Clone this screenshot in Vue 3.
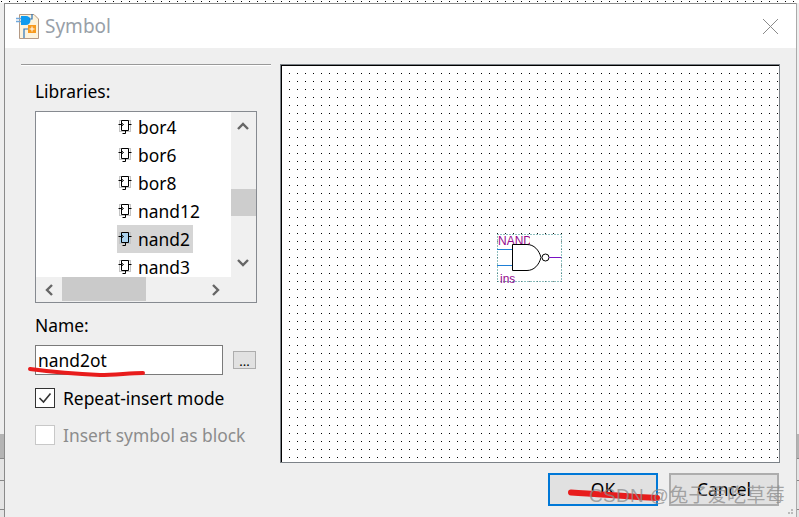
<template>
  <div class="screen">
    <div class="top-strip"></div>
    <div class="main">
      <div class="edge-strip">
        <div class="strip-space"></div>
        <div class="strip-thumb"></div>
        <div class="strip-row"></div>
        <div class="strip-row short"></div>
        <div class="strip-row last"></div>
      </div>

      <div class="dialog">
        <div class="titlebar">
          <svg class="app-icon" width="24" height="26" viewBox="0 0 24 26">
            <path d="M3.5 1.500H18L22.500 6V25.500H3.500Z" fill="#fdf3dc" stroke="#b49a85" />
            <path d="M0 5.500H6M0 8.500H6" stroke="#6fa8dc" stroke-width="1.500" />
            <path d="M5 3H10A4.500 4.500 0 0 1 10 12H5Z" fill="#0f9bf0" />
            <path d="M13 6H16V1M13 16H8V25" fill="none" stroke="#2a75bb" stroke-width="1.200" />
            <rect x="12" y="12" width="8" height="8" fill="#f79a1e" />
            <path d="M16 13.500V18.500M13.500 16H18.500" stroke="#fff" />
          </svg>
          <span class="title">Symbol</span>
          <svg class="close" width="17" height="17" viewBox="0 0 17 17">
            <path d="M1 1L16 16M16 1L1 16" stroke="#8a8a8a" stroke-width="1" />
          </svg>
        </div>

        <div class="body">
          <div class="content">
            <div class="side">
              <div class="rule"></div>
              <div class="label lib-label">Libraries:</div>
              <div class="listbox">
                <div class="list-top">
                  <ul class="list">
                    <li v-for="item in items" :key="item" class="row">
                      <span class="row-inner" :class="{ selected: item === 'nand2' }">
                        <svg class="sym" width="14" height="16" viewBox="0 0 14 16">
                          <rect x="1.500" y="1.500" width="11" height="11" :fill="item === 'nand2' ? '#a9d2ef' : 'none'" stroke="#c4c4c4" />
                          <path d="M3.500 1.500H10.500V11.500H3.500ZM3.500 5.500H0.500M3.500 4L5.500 5.500L3.500 7M10.500 5.500H13.500M7.500 11.500V14.500H4.500"
                            fill="none" stroke="#000" />
                        </svg>
                        <span>{{ item }}</span>
                      </span>
                    </li>
                  </ul>
                  <div class="vscroll">
                    <svg class="arrow" width="14" height="10" viewBox="0 0 14 10">
                      <path d="M2 8L7 3L12 8" fill="none" stroke="#666" stroke-width="2.400" />
                    </svg>
                    <div class="vthumb"></div>
                    <svg class="arrow arrow-down" width="14" height="10" viewBox="0 0 14 10">
                      <path d="M2 2L7 7L12 2" fill="none" stroke="#666" stroke-width="2.400" />
                    </svg>
                  </div>
                </div>
                <div class="hscroll">
                  <svg class="arrow-side" width="10" height="14" viewBox="0 0 10 14">
                    <path d="M8 2L3 7L8 12" fill="none" stroke="#666" stroke-width="2.400" />
                  </svg>
                  <div class="hthumb"></div>
                  <svg class="arrow-side right" width="10" height="14" viewBox="0 0 10 14">
                    <path d="M2 2L7 7L2 12" fill="none" stroke="#666" stroke-width="2.400" />
                  </svg>
                </div>
              </div>

              <div class="label name-label">Name:</div>
              <div class="name-row">
                <div class="name-input">nand2ot</div>
                <div class="browse">...</div>
              </div>

              <div class="check-row">
                <span class="box">
                  <svg width="18" height="18" viewBox="0 0 18 18">
                    <path d="M3.500 9L7.500 13L14.500 4.500" fill="none" stroke="#333" stroke-width="1.600" />
                  </svg>
                </span>
                <span>Repeat-insert mode</span>
              </div>
              <div class="check-row disabled">
                <span class="box"></span>
                <span>Insert symbol as block</span>
              </div>
            </div>

            <div class="canvas">
              <svg class="gate" width="70" height="54" viewBox="0 0 70 54">
                <rect x="0.500" y="0.500" width="64" height="47" fill="#fff" stroke="#1d7f7f" stroke-dasharray="1 2" />
                <text x="1" y="11" class="gate-text">NAND</text>
                <rect x="33" y="1" width="5" height="11" fill="#fff" />
                <text x="3" y="49" class="gate-text">ins</text>
                <path d="M0 15.500H15M0 31.500H15" stroke="#1e7fd6" />
                <path d="M15.500 10.500H30C37 10.500 42 16 44 23.500C42 31 37 36.500 30 36.500H15.500Z" fill="#fff" stroke="#000" />
                <circle cx="48.500" cy="23.500" r="3.500" fill="#fff" stroke="#000" />
                <path d="M52 23.500H64" stroke="#7a12c4" />
              </svg>
            </div>
          </div>

          <div class="footer">
            <div class="btn ok">OK</div>
            <div class="btn">Cancel</div>
          </div>
        </div>
      </div>

      <div class="edge-strip right-edge">
        <div class="strip-space"></div>
        <div class="strip-thumb"></div>
        <div class="strip-row"></div>
        <div class="strip-row short"></div>
        <div class="strip-row last"></div>
      </div>
    </div>

    <svg class="marks" width="799" height="517" viewBox="0 0 799 517">
      <path d="M30 369C60 373 75 374 100 375C115 375 130 373 143 373" fill="none" stroke="#e81c1c" stroke-width="4" stroke-linecap="round" />
      <path d="M571 492.500C600 494 630 497 657 498" fill="none" stroke="#e81c1c" stroke-width="6" stroke-linecap="round" />
      <path d="M791 514h2v-2h-2zM788 514h2v-2h-2zM791 511h2v-2h-2z" fill="#bbb" />
    </svg>
    <div class="watermark">CSDN @兔子爱吃草莓</div>
  </div>
</template>

<script setup>
const items = ['bor4', 'bor6', 'bor8', 'nand12', 'nand2', 'nand3']
</script>

<style>
html,
body {
  margin: 0;
  background: #fff;
}
</style>

<style scoped>
.screen {
  position: relative;
  width: 799px;
  height: 517px;
  overflow: hidden;
  display: flex;
  flex-direction: column;
  font-family: "Noto Sans", "Open Sans", sans-serif;
  font-size: 17.4px;
  color: #000;
  background: #fff;
}

.top-strip {
  height: 3px;
  flex: none;
  background-color: #000;
  background-image: linear-gradient(to right, transparent 1px, #fff 1px), linear-gradient(to bottom, transparent 1px, #fff 1px);
  background-size: 8px 8px;
  background-position: 1px 1px;
}

.main {
  flex: 1;
  display: flex;
  min-height: 0;
}

.edge-strip {
  width: 4px;
  flex: none;
  display: flex;
  flex-direction: column;
  background: #eee;
}

.right-edge {
  flex: 1;
  box-sizing: border-box;
  border-left: 1px solid #aaa;
}

.strip-space {
  height: 431px;
}

.strip-thumb {
  height: 24px;
  background: #b4b4b4;
}

.strip-row {
  height: 21px;
  border-top: 1px solid #888;
  background: #e4e4e4;
}

.strip-row.short {
  height: 28px;
}

.strip-row.last {
  flex: 1;
}

.dialog {
  width: 792px;
  flex: none;
  box-sizing: border-box;
  border: 1px solid #8a8a8a;
  border-width: 1px 0 0 1px;
  display: flex;
  flex-direction: column;
}

.titlebar {
  height: 44px;
  flex: none;
  display: flex;
  align-items: center;
  padding: 0 17px 0 11px;
  background: #fff;
}

.app-icon {
  margin-right: 5px;
}

.title {
  font-size: 19px;
  color: #98a0a8;
  margin-bottom: 1px;
}

.close {
  margin-left: auto;
  margin-top: 1px;
}

.body {
  flex: 1;
  display: flex;
  flex-direction: column;
  background: #efefef;
}

.content {
  display: flex;
  align-items: flex-start;
}

.side {
  width: 275px;
  flex: none;
  padding-left: 30px;
  box-sizing: border-box;
}

.rule {
  width: 250px;
  height: 1px;
  margin: 16px 0 0 -14px;
  background: #999;
  border-bottom: 1px solid #fff;
}

.label {
  line-height: 24px;
}

.lib-label {
  margin-top: 13px;
}

.listbox {
  width: 222px;
  height: 192px;
  margin-top: 8px;
  box-sizing: border-box;
  border: 1px solid #868a90;
  display: flex;
  flex-direction: column;
}

.list-top {
  height: 165px;
  display: flex;
}

.list {
  width: 195px;
  height: 165px;
  margin: 0;
  padding: 1px 0 0 81px;
  box-sizing: border-box;
  list-style: none;
  overflow: hidden;
  background: #fff;
}

.row {
  height: 28px;
  display: flex;
}

.row-inner {
  display: flex;
  align-items: center;
  gap: 6px;
  padding-right: 3px;
  line-height: 28px;
}

.row-inner.selected {
  background: #d5d5d5;
}

.sym {
  margin-left: 1px;
}

.vscroll {
  flex: 1;
  display: flex;
  flex-direction: column;
  position: relative;
  background: #f0f0f0;
}

.arrow {
  position: absolute;
  left: 5px;
  top: 9px;
}

.arrow-down {
  top: 146px;
}

.vthumb {
  height: 27px;
  margin-top: 77px;
  background: #cdcdcd;
}

.hscroll {
  flex: 1;
  display: flex;
  align-items: center;
  background: #f0f0f0;
}

.arrow-side {
  margin-left: 8px;
}

.hthumb {
  width: 84px;
  height: 24px;
  margin-left: 8px;
  align-self: flex-start;
  background: #cacaca;
}

.arrow-side.right {
  margin-left: 65px;
}

.name-label {
  margin-top: 10px;
}

.name-row {
  display: flex;
  align-items: center;
  gap: 10px;
  margin-top: 8px;
}

.name-input {
  width: 188px;
  height: 30px;
  box-sizing: border-box;
  border: 1px solid #7a7a7a;
  background: #fff;
  padding-left: 2px;
  line-height: 28px;
}

.browse {
  width: 23px;
  height: 18px;
  box-sizing: border-box;
  border: 1px solid #adadad;
  background: #e1e1e1;
  text-align: center;
  font-size: 13px;
  line-height: 18px;
}

.check-row {
  display: flex;
  align-items: center;
  gap: 8px;
  height: 20px;
  margin-top: 13px;
}

.check-row.disabled {
  margin-top: 17px;
  color: #8c8c8c;
}

.box {
  width: 20px;
  height: 20px;
  flex: none;
  box-sizing: border-box;
  border: 1px solid #333;
  background: #fff;
}

.box svg {
  display: block;
}

.disabled .box {
  border-color: #c8c8c8;
}

.canvas {
  position: relative;
  width: 500px;
  height: 399px;
  flex: none;
  margin-top: 16px;
  box-sizing: border-box;
  border: 1px solid #7c8288;
  box-shadow: inset 1px 1px 0 #000;
  background-color: #000;
  background-image: linear-gradient(to right, transparent 1px, #fff 1px), linear-gradient(to bottom, transparent 1px, #fff 1px);
  background-size: 8px 8px;
}

.gate {
  position: absolute;
  left: 216px;
  top: 169px;
}

.gate-text {
  font-family: "Liberation Sans", sans-serif;
  font-size: 12px;
  fill: #950a8e;
}

.footer {
  display: flex;
  justify-content: flex-end;
  gap: 11px;
  margin-top: 10px;
  padding-right: 17px;
}

.btn {
  width: 110px;
  height: 33px;
  box-sizing: border-box;
  border: 2px solid #adadad;
  background: #e1e1e1;
  text-align: center;
  line-height: 29px;
}

.btn.ok {
  border-color: #0078d7;
}

.marks {
  position: absolute;
  left: 0;
  top: 0;
  pointer-events: none;
}

.watermark {
  position: absolute;
  left: 589px;
  top: 484px;
  font-family: "Liberation Sans", "Noto Sans CJK SC", sans-serif;
  font-size: 19px;
  line-height: 24px;
  letter-spacing: 0.3px;
  white-space: nowrap;
  color: rgba(140, 140, 140, 0.75);
}
</style>
